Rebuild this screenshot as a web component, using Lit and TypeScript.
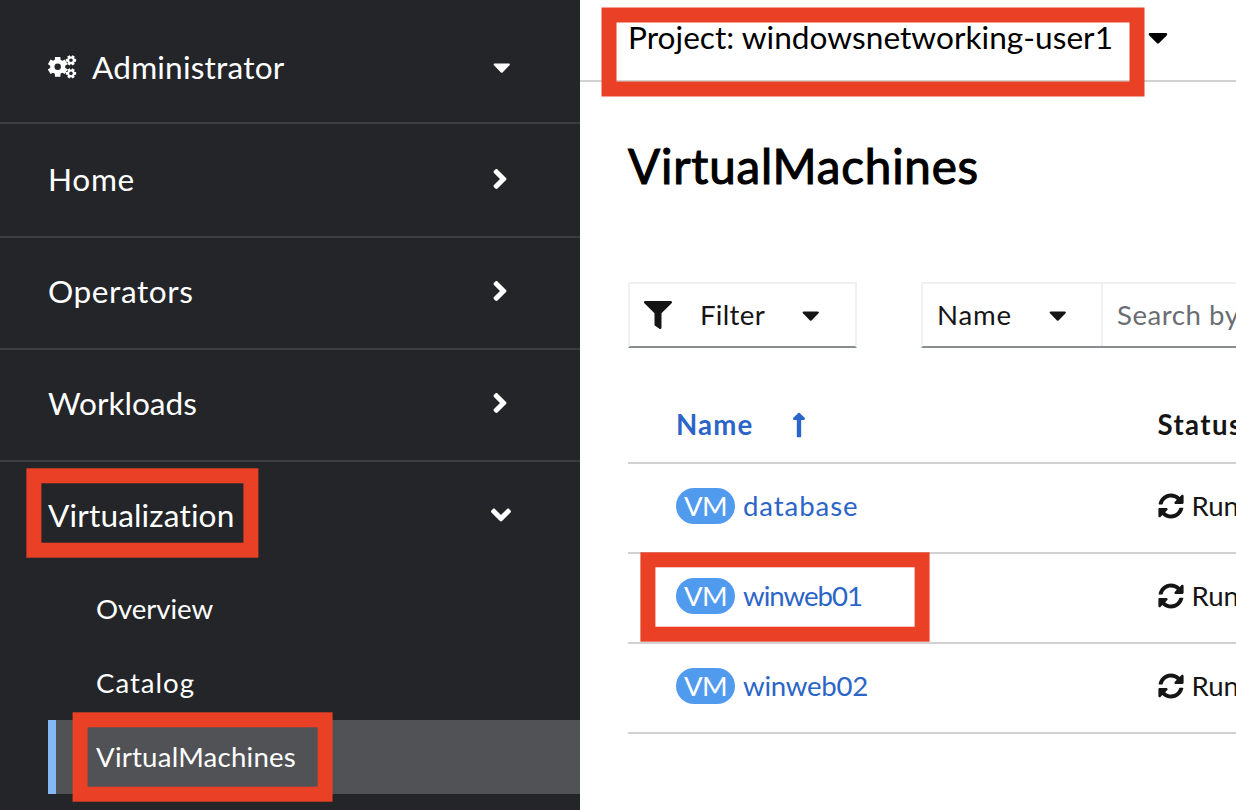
import { LitElement, html, svg, css } from "lit";
import { customElement, property } from "lit/decorators.js";
import { styleMap } from "lit/directives/style-map.js";

const ICONS: Record<string, { w: number; d: string }> = {
  caret: { w: 320, d: "M31.3 192h257.3c17.8 0 26.7 21.5 14.1 34.1L174.1 354.8c-7.8 7.8-20.5 7.8-28.3 0L17.2 226.1C4.6 213.5 13.5 192 31.3 192z" },
  right: { w: 256, d: "M224.3 273l-136 136c-9.4 9.4-24.6 9.4-33.9 0l-22.6-22.6c-9.4-9.4-9.4-24.6 0-33.9l96.4-96.4-96.4-96.4c-9.4-9.4-9.4-24.6 0-33.9L54.3 103c9.4-9.4 24.6-9.4 33.9 0l136 136c9.5 9.4 9.5 24.6.1 34z" },
  down: { w: 320, d: "M143 352.3L7 216.3c-9.4-9.4-9.4-24.6 0-33.9l22.6-22.6c9.4-9.4 24.6-9.4 33.9 0l96.4 96.4 96.4-96.4c9.4-9.4 24.6-9.4 33.9 0l22.6 22.6c9.4 9.4 9.4 24.6 0 33.9l-136 136c-9.2 9.4-24.4 9.4-33.8 0z" },
  up: { w: 256, d: "M88 166.059V468c0 6.627 5.373 12 12 12h56c6.627 0 12-5.373 12-12V166.059h46.059c21.382 0 32.09-25.851 16.971-40.971l-86.059-86.059c-9.373-9.373-24.569-9.373-33.941 0l-86.059 86.059c-15.119 15.119-4.411 40.971 16.971 40.971H88z" },
  filter: { w: 512, d: "M487.976 0H24.028C2.71 0-8.047 25.866 7.058 40.971L192 225.941V432c0 7.831 3.821 15.17 10.237 19.662l80 55.98C298.02 518.69 320 507.493 320 487.98V225.941l184.947-184.97C520.021 25.896 509.338 0 487.976 0z" },
  sync: { w: 512, d: "M370.72 133.28C339.458 104.008 298.888 87.962 255.848 88c-77.458.068-144.328 53.178-162.791 126.85-1.344 5.363-6.122 9.15-11.651 9.15H24.103c-7.498 0-13.194-6.807-11.807-14.176C33.933 94.924 134.813 8 256 8c66.448 0 126.791 26.136 171.315 68.685L463.03 40.97C478.149 25.851 504 36.559 504 57.941V192c0 13.255-10.745 24-24 24H345.941c-21.382 0-32.09-25.851-16.971-40.971l41.75-41.749zM32 296h134.059c21.382 0 32.09 25.851 16.971 40.971l-41.75 41.75c31.262 29.273 71.835 45.319 114.876 45.28 77.418-.07 144.315-53.144 162.787-126.849 1.344-5.363 6.122-9.15 11.651-9.15h57.304c7.498 0 13.194 6.807 11.807 14.176C478.067 417.076 377.187 504 256 504c-66.448 0-126.791-26.136-171.315-68.685L48.97 471.03C33.851 486.149 8 475.441 8 454.059V320c0-13.255 10.745-24 24-24z" },
};

const icon = (name: string, size: number) => {
  const { w, d } = ICONS[name];
  return html`<svg class="icon" width=${(w / 512) * size} height=${size} viewBox="0 0 ${w} 512"><path fill="currentColor" d=${d}></path></svg>`;
};

// Outline of a six-toothed gear with a round bore.
const gear = (cx: number, cy: number, outer: number, root: number, bore: number, turn = 0) => {
  const pts: string[] = [];
  for (let i = 0; i < 6; i++) {
    const a = (i * 60 + turn - 90) * (Math.PI / 180);
    for (const [r, o] of [[root, -0.38], [outer, -0.27], [outer, 0.27], [root, 0.38]]) {
      pts.push(`${(cx + r * Math.cos(a + o)).toFixed(2)} ${(cy + r * Math.sin(a + o)).toFixed(2)}`);
    }
  }
  return `M${pts.join("L")}ZM${cx - bore} ${cy}a${bore} ${bore} 0 1 0 ${2 * bore} 0a${bore} ${bore} 0 1 0 ${-2 * bore} 0Z`;
};

/** Text whose tracking is spread so that the run takes the given width. */
@customElement("fit-text")
class FitText extends LitElement {
  @property({ type: Number }) width = 0;
  @property() text = "";
  @property({ attribute: false }) tracking = 0;
  static styles = css`
    :host { display: block; white-space: nowrap; flex: none; }
    .run { display: inline-block; }
  `;
  firstUpdated() {
    const run = this.renderRoot.querySelector(".run") as HTMLElement;
    this.tracking = (this.width - run.getBoundingClientRect().width) / this.text.length;
  }
  render() {
    return html`<span class="run" style=${styleMap({ letterSpacing: `${this.tracking}px` })}>${this.text}</span>`;
  }
}

const t = (text: string, width: number) => html`<fit-text .text=${text} .width=${width}></fit-text>`;

@customElement("app-root")
class AppRoot extends LitElement {
  static styles = css`
    :host {
      display: flex; position: relative; width: 1236px; height: 810px; overflow: hidden;
      background: #fff; color: #151515; font-family: Lato, sans-serif; font-size: 27.6px; line-height: 36px;
    }
    * { box-sizing: border-box; }
    .icon { display: block; flex: none; }
    nav { width: 580px; flex: none; background: #242529; color: #fff; }
    .row { display: flex; align-items: center; justify-content: space-between; height: 112px; padding: 0 72px 4px 48px; border-bottom: 2px solid #3d3e42; font-size: 31.6px; }
    .persona { height: 124px; padding: 12px 69.5px 0 48px; }
    .home { height: 114px; padding-top: 2px; padding-bottom: 4px; }
    .open { height: 110px; border: 0; padding-right: 69.5px; }
    .who { display: flex; align-items: center; gap: 15px; }
    .sub { display: flex; align-items: center; height: 74px; margin-left: 48px; padding-left: 48px; }
    .current { background: #515256; border-left: 8px solid #83b8f3; padding-left: 40px; }
    main { flex: 1; min-width: 0; }
    .project { display: flex; align-items: flex-start; gap: 35px; height: 82px; padding: 19px 0 0 48px; border-bottom: 2px solid #d2d2d2; font-size: 31.6px; color: #000; }
    .project > .icon { margin-top: 2px; }
    .body { padding-left: 48px; }
    h1 { margin: 0; padding-top: 54px; height: 200px; font-size: 47.5px; line-height: 60px; font-weight: 400; -webkit-text-stroke: 1.1px #000; color: #000; }
    .tools { display: flex; gap: 64px; height: 66px; }
    .box { display: flex; border: 2px solid #f0f0f0; border-bottom-color: #8a8d90; }
    .filter { flex: none; width: 229px; align-items: center; padding-left: 14px; gap: 28px; }
    .search { flex: 1; min-width: 0; border-right: 0; }
    .kind { flex: none; display: flex; align-items: center; width: 180px; padding-left: 14px; gap: 37px; border-right: 2px solid #f0f0f0; }
    .ph { display: flex; align-items: center; padding-left: 14px; color: #6a6e73; }
    .caret-f { margin-left: 9px; }
    .tr { display: grid; grid-template-columns: 481.5px 1fr; align-items: center; height: 90px; padding: 0 0 4px 48px; border-bottom: 2px solid #d2d2d2; }
    .th { height: 116px; padding-top: 40px; padding-bottom: 0; font-weight: 700; }
    .cell { display: flex; align-items: center; gap: 8px; }
    .sort { color: #2b65c8; gap: 38px; }
    .link { color: #2b65c8; }
    .badge { display: flex; justify-content: center; width: 59px; height: 36px; border-radius: 18px; background: #519bee; color: #fff; }
    .marks { position: absolute; inset: 0; fill: none; stroke: #ea4026; stroke-width: 15; }
  `;

  render() {
    const nav = (label: string, w: number, cls = "") => html`<div class="row ${cls}">${t(label, w)}${icon("right", 32)}</div>`;
    const vm = (name: string, w: number) => html`
      <div class="tr">
        <div class="cell"><span class="badge">${t("VM", 43)}</span><span class="link">${t(name, w)}</span></div>
        <div class="cell">${icon("sync", 26)}${t("Running", 99)}</div>
      </div>`;
    const marks = [[601.5, 7.5, 543, 89], [26.4, 468.3, 232, 89.4], [72.6, 712.3, 260, 89.4], [640.4, 552.3, 289.2, 89.4]];
    return html`
      <nav>
        <div class="row persona">
          <div class="who">
            <svg class="icon" width="29" height="24" viewBox="48 55 29 24">
              <path fill="currentColor" fill-rule="evenodd" d="${gear(57.7, 66.8, 10.2, 7.6, 3.2)}${gear(71, 60.3, 5.3, 3.9, 1.8, 30)}${gear(71, 73.4, 5.3, 3.9, 1.8, 30)}"></path>
            </svg>
            ${t("Administrator", 192.5)}
          </div>
          ${icon("caret", 28)}
        </div>
        ${nav("Home", 87, "home")}${nav("Operators", 145.5)}${nav("Workloads", 149)}
        <div class="row open">${t("Virtualization", 187)}${icon("down", 32)}</div>
        <div class="sub">${t("Overview", 117)}</div>
        <div class="sub">${t("Catalog", 99)}</div>
        <div class="sub current">${t("VirtualMachines", 200)}</div>
      </nav>
      <main>
        <div class="project">${t("Project: windowsnetworking-user1", 485)}${icon("caret", 32)}</div>
        <div class="body">
          <h1>${t("VirtualMachines", 351)}</h1>
          <div class="tools">
            <div class="box filter">${icon("filter", 28)}${t("Filter", 65)}<span class="caret-f">${icon("caret", 28)}</span></div>
            <div class="box search">
              <div class="kind">${t("Name", 75)}${icon("caret", 28)}</div>
              <div class="ph">${t("Search by name...", 219)}</div>
            </div>
          </div>
          <div class="tr th"><div class="cell sort">${t("Name", 77.5)}${icon("up", 28)}</div><div>${t("Status", 85)}</div></div>
          ${vm("database", 115.5)}${vm("winweb01", 119)}${vm("winweb02", 125)}
        </div>
      </main>
      <svg class="marks" width="1236" height="810">
        ${marks.map(([x, y, w, h]) => svg`<rect x=${x + 7.5} y=${y + 7.5} width=${w - 15} height=${h - 15}></rect>`)}
      </svg>`;
  }
}
